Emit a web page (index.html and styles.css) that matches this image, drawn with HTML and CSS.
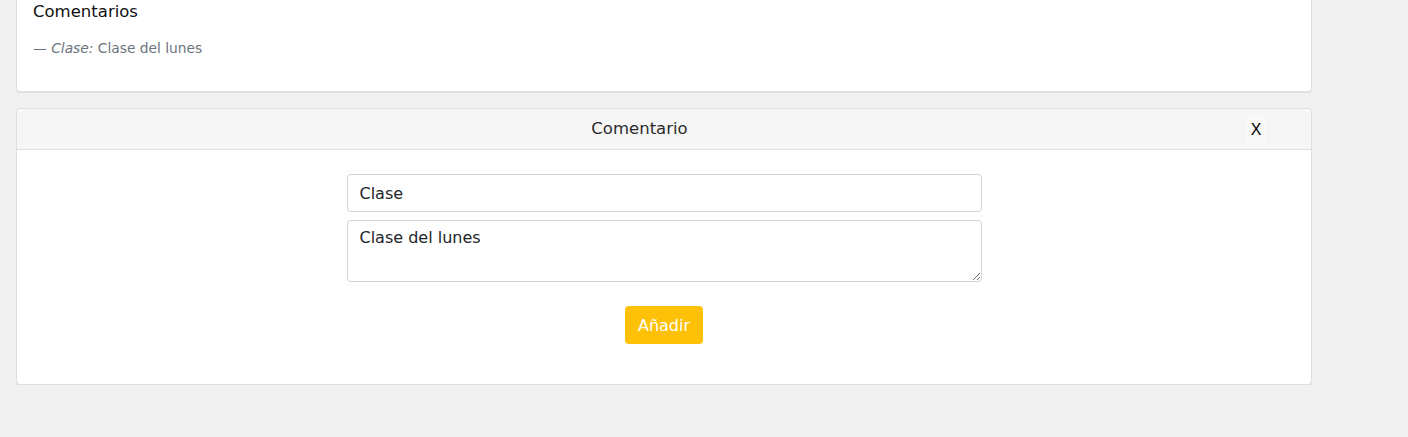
FILE: index.html
```html
<!DOCTYPE html>
<html lang="es">
<head>
<meta charset="utf-8">
<title>Comentarios</title>
<link rel="stylesheet" href="styles.css">
</head>
<body>
<div class="page">
  <div class="card comments">
    <div class="card-body">
      <h5 class="comments-title">Comentarios</h5>
      <p class="quote-footer">— <em>Clase:</em> Clase del lunes</p>
    </div>
  </div>

  <div class="card form-card">
    <div class="card-header">
      <span class="header-title">Comentario</span>
      <button class="close-btn" type="button">X</button>
    </div>
    <div class="card-body form-body">
      <form class="comment-form">
        <input class="field" type="text" value="Clase">
        <textarea class="field area">Clase del lunes</textarea>
        <button class="add-btn" type="button">Añadir</button>
      </form>
    </div>
  </div>
</div>
</body>
</html>
```

FILE: styles.css
```css
* { box-sizing: border-box; }

html, body {
  margin: 0;
  padding: 0;
  background: #f0f0f0;
  font-family: "DejaVu Sans", "Liberation Sans", sans-serif;
  color: #212529;
}

.page {
  width: 1296px;
  margin-left: 16px;
  margin-top: -16px;
  display: flex;
  flex-direction: column;
  gap: 16px;
}

.card {
  background: #fff;
  border: 1px solid #dedede;
  border-radius: 4px;
  box-shadow: 0 1px 1px rgba(0,0,0,0.06);
}

.comments .card-body {
  padding: 16px 16px 20px 16px;
  height: 106px;
}

.comments-title {
  margin: 0;
  font-size: 16.5px;
  font-weight: 500;
  line-height: 22px;
  color: #111;
}

.quote-footer {
  margin: 15px 0 0 0;
  font-size: 13.8px;
  line-height: 20px;
  color: #6c757d;
}

.quote-footer em { font-style: italic; }

.card-header {
  height: 41px;
  background: #f6f6f6;
  border-bottom: 1px solid #dedede;
  display: flex;
  align-items: center;
  padding: 0 45px 0 16px;
  border-radius: 4px 4px 0 0;
}

.header-title {
  flex: 1;
  text-align: center;
  font-size: 16.5px;
  color: #2b2b2b;
  margin-top: -2px;
}

.close-btn {
  width: 20px;
  height: 27px;
  border: none;
  background: #f9f9f9;
  padding: 0;
  font-family: "Liberation Sans", Arial, sans-serif;
  font-size: 16px;
  color: #000;
  margin-top: 1px;
}

.form-body {
  padding: 24px 16px 40px 16px;
}

.comment-form {
  width: 635px;
  margin: 0 auto;
  display: flex;
  flex-direction: column;
  align-items: center;
}

.field {
  width: 100%;
  border: 1px solid #ced4da;
  border-radius: 4px;
  font-family: inherit;
  font-size: 16px;
  color: #212529;
  padding: 0 12px;
  background: #fff;
}

input.field {
  height: 38px;
}

.area {
  height: 62px;
  margin-top: 8px;
  padding-top: 6px;
  resize: vertical;
  line-height: 22px;
}

.add-btn {
  margin-top: 24px;
  width: 78px;
  height: 38px;
  border: none;
  border-radius: 4px;
  background: #ffc107;
  color: #fff;
  font-family: inherit;
  font-size: 16px;
  padding: 0;
}
```
